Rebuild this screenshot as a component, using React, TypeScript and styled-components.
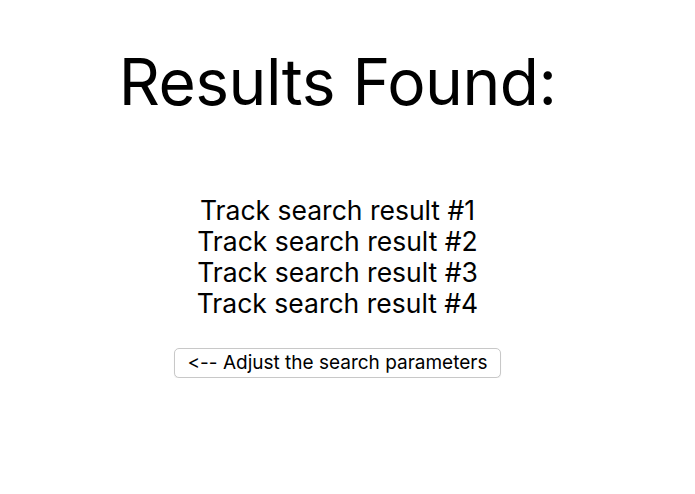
import styled, { createGlobalStyle } from "styled-components";

const GlobalStyle = createGlobalStyle`
  html, body {
    margin: 0;
    padding: 0;
    background: #ffffff;
  }
  body {
    font-family: Inter, "Noto Sans", sans-serif;
    font-feature-settings: "calt" 0, "liga" 0;
    color: #000000;
  }
`;

const Page = styled.div`
  display: flex;
  flex-direction: column;
  align-items: center;
  padding: 0 20px 0 0;
  text-align: center;
`;

const Title = styled.h1`
  font-size: 64px;
  font-weight: 400;
  letter-spacing: -0.5px;
  margin: 44px 0 0;
  line-height: 1.2;
`;

const ResultList = styled.ul`
  list-style: none;
  margin: 74px 0 0;
  padding: 0;
`;

const ResultItem = styled.li`
  font-size: 26.5px;
  line-height: 31px;
`;

const BackButton = styled.button`
  margin-top: 29px;
  height: 30px;
  padding: 0 13px;
  font-family: Inter, "Noto Sans", sans-serif;
  font-feature-settings: "calt" 0, "liga" 0;
  font-size: 19px;
  color: #000;
  background: #ffffff;
  border: 1px solid #c8c8c8;
  border-radius: 5px;
  box-shadow: 0 1px 1px rgba(0, 0, 0, 0.08);
  cursor: pointer;
`;

const results = [1, 2, 3, 4];

export default function App() {
  return (
    <>
      <GlobalStyle />
      <Page>
        <Title>Results Found:</Title>
        <ResultList>
          {results.map((n) => (
            <ResultItem key={n}>Track search result #{n}</ResultItem>
          ))}
        </ResultList>
        <BackButton>&lt;-- Adjust the search parameters</BackButton>
      </Page>
    </>
  );
}
